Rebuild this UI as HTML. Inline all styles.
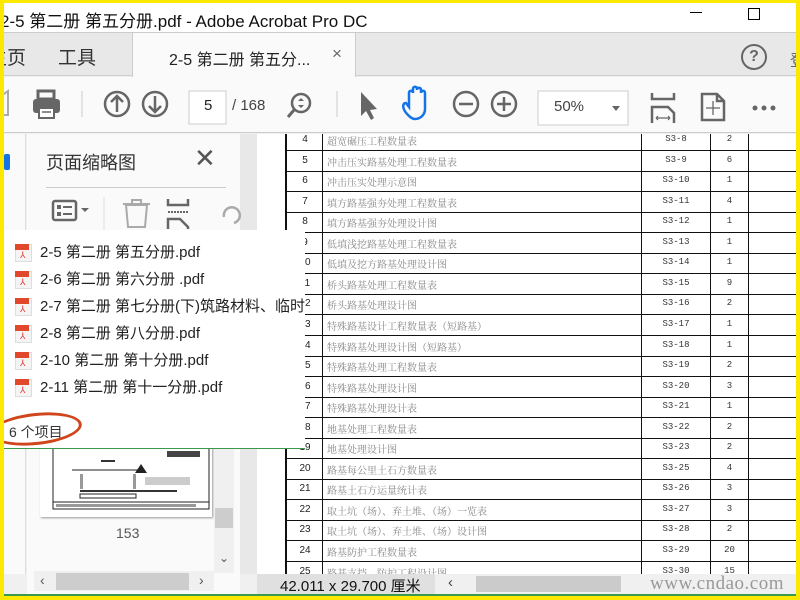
<!DOCTYPE html>
<html><head><meta charset="utf-8"><style>
*{margin:0;padding:0;box-sizing:border-box}
body{width:800px;height:600px;overflow:hidden;background:#fde800;font-family:"Liberation Sans","Noto Sans CJK SC",sans-serif;position:relative}
.a{position:absolute}
#win{position:absolute;left:4px;top:3px;width:792px;height:593px;background:#f0f0f0;overflow:hidden}
.cell{position:absolute;font-family:"Liberation Serif","Noto Serif CJK SC",serif;font-size:10px;color:#888;white-space:nowrap}
.num{font-family:"Liberation Sans",sans-serif;color:#222;font-size:10px}
.code{font-family:"Liberation Mono",monospace;color:#333;font-size:9px}
.fi{position:absolute;left:11px;width:290px;height:22px;font-size:15px;color:#222;white-space:nowrap;overflow:hidden}
.fi .ic{position:absolute;left:0;top:3px;width:17px;height:18px;background:#f4f4f4;border:1px solid #ddd}
.fi .ic:before{content:"";position:absolute;left:-1px;top:-1px;width:14px;height:6px;background:#e0472b}
.fi .ic:after{content:"⅄";position:absolute;left:4px;top:5px;font-size:9px;color:#d33}
.fi span{position:absolute;left:25px;top:0}
</style></head><body>
<div id="win">
<div class="a" style="left:0;top:0;width:792px;height:29px;background:#fff"></div>
<div class="a" style="left:-4px;top:4px;font-size:17px;color:#111;white-space:nowrap">2-5 第二册 第五分册.pdf - Adobe Acrobat Pro DC</div>
<div class="a" style="left:686px;top:9px;width:12px;height:1px;background:#000"></div>
<div class="a" style="left:744px;top:5px;width:12px;height:12px;border:1px solid #000"></div>
<div class="a" style="left:0;top:29px;width:792px;height:44px;background:#e8e8e8;border-top:1px solid #ccc;border-bottom:1px solid #ccc"></div>
<div class="a" style="left:-16px;top:40px;font-size:19px;color:#333">主页</div>
<div class="a" style="left:54px;top:40px;font-size:19px;color:#333">工具</div>
<div class="a" style="left:128px;top:29px;width:224px;height:45px;background:#fafafa;border-left:1px solid #ccc;border-right:1px solid #ccc;border-top:1px solid #ccc"></div>
<div class="a" style="left:165px;top:43px;font-size:16px;color:#222">2-5 第二册 第五分...</div>
<div class="a" style="left:328px;top:41px;font-size:17px;color:#666">×</div>
<div class="a" style="left:737px;top:41px;width:26px;height:26px;border:2.5px solid #666;border-radius:50%;text-align:center;font-size:16px;font-weight:bold;color:#666;line-height:21px">?</div>
<div class="a" style="left:786px;top:44px;font-size:16px;color:#666">登</div>
<div class="a" style="left:0;top:74px;width:792px;height:56px;background:#fafafa;border-bottom:1px solid #ccc"></div>
<svg class="a" style="left:0;top:74px" width="792" height="56">
<path d="M-4 20 L4 14 L4 38 L-4 38" fill="none" stroke="#aaa" stroke-width="2"/>
<rect x="34" y="14" width="16" height="8" fill="none" stroke="#666" stroke-width="3"/>
<rect x="29" y="22" width="27" height="14" rx="3" fill="#666"/>
<rect x="35" y="31" width="15" height="10" fill="#fff" stroke="#666" stroke-width="2"/>
<line x1="38" y1="35" x2="47" y2="35" stroke="#666" stroke-width="1.5"/>
<line x1="78" y1="14" x2="78" y2="40" stroke="#ccc"/>
<circle cx="113" cy="27" r="12" fill="none" stroke="#666" stroke-width="2.5"/>
<path d="M113 35 V19 M107 25 L113 19 L119 25" fill="none" stroke="#666" stroke-width="2.5"/>
<circle cx="151" cy="27" r="12" fill="none" stroke="#666" stroke-width="2.5"/>
<path d="M151 19 V35 M145 29 L151 35 L157 29" fill="none" stroke="#666" stroke-width="2.5"/>
<rect x="185" y="14" width="37" height="33" fill="#fff" stroke="#ccc"/>
<circle cx="297" cy="26" r="9" fill="none" stroke="#666" stroke-width="2.5"/>
<path d="M290 33 L284 40" stroke="#666" stroke-width="3"/>
<path d="M294 24 L297 21 L300 24 Z M294 28 L297 31 L300 28 Z" fill="#666"/>
<line x1="333" y1="14" x2="333" y2="40" stroke="#ccc"/>
<path d="M357 15 L357 39 L362 34 L367 43 L370 41 L366 33 L373 32 Z" fill="#666"/>
<path d="M404 38 C398 32 398 26 402 26 L405 30 L405 16 C405 13 409 13 409 16 L409 12 C409 9 413 9 413 12 L413 13 C413 10 417 10 417 13 L417 16 C417 13 421 13 421 16 L421 32 C421 38 416 42 411 42 C408 42 406 40 404 38 Z" fill="none" stroke="#1473e6" stroke-width="2.5"/>
<circle cx="462" cy="27" r="12" fill="none" stroke="#666" stroke-width="2.5"/>
<path d="M455 27 H469" stroke="#666" stroke-width="2.5"/>
<circle cx="500" cy="27" r="12" fill="none" stroke="#666" stroke-width="2.5"/>
<path d="M493 27 H507 M500 20 V34" stroke="#666" stroke-width="2.5"/>
<rect x="534" y="14" width="90" height="34" fill="#fff" stroke="#ccc"/>
<path d="M608 29 L616 29 L612 34 Z" fill="#666"/>
<path d="M648 16 V22 H670 V16 M648 46 V30 H664 L670 36 V46" fill="none" stroke="#666" stroke-width="2.5"/>
<path d="M652 41 H666 M652 41 l2 -2 M652 41 l2 2 M666 41 l-2 -2 M666 41 l-2 2" stroke="#666" stroke-width="1.2"/>
<path d="M698 17 H713 L720 24 V43 H698 Z M713 17 V24 H720" fill="none" stroke="#666" stroke-width="2.5"/>
<path d="M709 24 V38 M702 31 H716" stroke="#666" stroke-width="1.3"/>
<circle cx="751" cy="31" r="2.5" fill="#666"/><circle cx="760" cy="31" r="2.5" fill="#666"/><circle cx="769" cy="31" r="2.5" fill="#666"/>
</svg>
<div class="a" style="left:200px;top:94px;font-size:15px;color:#222">5</div>
<div class="a" style="left:228px;top:94px;font-size:15px;color:#444">/ 168</div>
<div class="a" style="left:550px;top:95px;font-size:15px;color:#444">50%</div>
<div class="a" style="left:236px;top:131px;width:556px;height:440px;background:#e8e8e8"></div>
<div class="a" style="left:253px;top:131px;width:539px;height:440px;background:#fff;overflow:hidden">
<div class="a" style="left:28px;top:0;width:2px;height:440px;background:#111"></div>
<div class="a" style="left:65px;top:0;width:1px;height:440px;background:#111"></div>
<div class="a" style="left:384px;top:0;width:1px;height:440px;background:#111"></div>
<div class="a" style="left:453px;top:0;width:1px;height:440px;background:#111"></div>
<div class="a" style="left:491px;top:0;width:1px;height:440px;background:#111"></div>
<div id="rows"></div>
</div>
<div class="a" style="left:0;top:131px;width:22px;height:440px;background:#fafafa;border-right:1px solid #ddd"></div>
<div class="a" style="left:0;top:151px;width:6px;height:16px;background:#1473e6;border-radius:2px"></div>
<div class="a" style="left:23px;top:131px;width:213px;height:465px;background:#fafafa"></div>
<div class="a" style="left:42px;top:146px;font-size:18px;color:#333">页面缩略图</div>
<div class="a" style="left:190px;top:140px;font-size:26px;color:#555;font-weight:300">✕</div>
<div class="a" style="left:42px;top:184px;width:180px;height:1px;background:#ccc"></div>
<svg class="a" style="left:40px;top:190px" width="200" height="40">
<rect x="9" y="8" width="23" height="19" rx="2" fill="none" stroke="#666" stroke-width="2.5"/>
<rect x="13" y="12" width="4" height="4" fill="#666"/><rect x="13" y="19" width="4" height="4" fill="#666"/>
<path d="M19 14 H28 M19 21 H28" stroke="#666" stroke-width="2"/>
<path d="M37 15 L45 15 L41 19 Z" fill="#666"/>
<line x1="60" y1="4" x2="60" y2="40" stroke="#ddd"/>
<path d="M82 12 L84 34 H101 L103 12 Z M79 11 H106 M88 11 V7 H97 V11" fill="none" stroke="#aaa" stroke-width="2"/>
<path d="M124 6 V12 H144 V6 M124 36 V26 H136 L144 34 V36" fill="none" stroke="#666" stroke-width="2.5"/>
<path d="M124 19 H144" stroke="#666" stroke-width="2" stroke-dasharray="2 1"/>
<path d="M180 24 A8 8 0 1 1 190 30" fill="none" stroke="#aaa" stroke-width="2.5"/>
</svg>
<div class="a" style="left:36px;top:444px;width:172px;height:70px;background:#fff;box-shadow:1px 1px 2px #999"></div>
<svg class="a" style="left:36px;top:444px" width="172" height="70">
<rect x="13" y="0" width="156" height="62" fill="none" stroke="#222"/>
<rect x="127" y="4" width="33" height="6" fill="#444"/>
<rect x="61" y="13" width="14" height="2" fill="#333"/>
<line x1="32" y1="23" x2="98" y2="23" stroke="#222"/>
<rect x="40" y="27" width="3" height="15" fill="#999"/><rect x="93" y="27" width="3" height="15" fill="#999"/>
<line x1="40" y1="44" x2="137" y2="44" stroke="#333" stroke-width="2"/>
<rect x="40" y="47" width="56" height="4" fill="none" stroke="#222"/>
<path d="M95 26 L101 17 L107 26 Z" fill="#222"/>
<rect x="105" y="30" width="45" height="8" fill="#ccc"/>
<line x1="13" y1="55" x2="169" y2="55" stroke="#222"/>
<rect x="16" y="57" width="140" height="3" fill="#999"/>
</svg>
<div class="a" style="left:112px;top:522px;font-size:14px;color:#555">153</div>
<div class="a" style="left:210px;top:444px;width:20px;height:126px;background:#f0f0f0"></div>
<div class="a" style="left:211px;top:505px;width:18px;height:20px;background:#cdcdcd"></div>
<div class="a" style="left:215px;top:548px;font-size:12px;color:#555">⌄</div>
<div class="a" style="left:30px;top:568px;width:180px;height:20px;background:#f0f0f0"></div>
<div class="a" style="left:52px;top:570px;width:133px;height:17px;background:#cdcdcd"></div>
<div class="a" style="left:36px;top:569px;font-size:14px;color:#555">‹</div>
<div class="a" style="left:195px;top:569px;font-size:14px;color:#555">›</div>
<div class="a" style="left:253px;top:571px;width:178px;height:20px;background:#e0e0e0"></div>
<div class="a" style="left:276px;top:572px;font-size:15px;color:#111">42.011 x 29.700 厘米</div>
<div class="a" style="left:431px;top:571px;width:361px;height:20px;background:#f0f0f0"></div>
<div class="a" style="left:444px;top:571px;font-size:15px;color:#444">‹</div>
<div class="a" style="left:472px;top:573px;width:145px;height:16px;background:#cbcbcb"></div>
<div class="a" style="left:646px;top:570px;font-family:'Liberation Serif',serif;font-size:19px;color:#999;letter-spacing:0.5px">www.cndao.com</div>
<div class="a" style="left:0;top:591px;width:792px;height:2px;background:#3a9a4a"></div>
<div class="a" style="left:0;top:227px;width:301px;height:219px;background:#fff;border-bottom:1.5px solid #3a9a4a"></div>
<div class="fi" style="top:238px"><div class="ic"></div><span>2-5 第二册 第五分册.pdf</span></div>
<div class="fi" style="top:265px"><div class="ic"></div><span>2-6 第二册 第六分册 .pdf</span></div>
<div class="fi" style="top:292px"><div class="ic"></div><span>2-7 第二册 第七分册(下)筑路材料、临时</span></div>
<div class="fi" style="top:319px"><div class="ic"></div><span>2-8 第二册 第八分册.pdf</span></div>
<div class="fi" style="top:346px"><div class="ic"></div><span>2-10 第二册 第十分册.pdf</span></div>
<div class="fi" style="top:373px"><div class="ic"></div><span>2-11 第二册 第十一分册.pdf</span></div>
<div class="a" style="left:5px;top:419px;font-size:14px;color:#333">6 个项目</div>
<div class="a" style="left:-14px;top:410px;width:92px;height:32px;border:3px solid #d0451b;border-radius:50%;transform:rotate(-6deg)"></div>
</div>
<script>
var d=[["4","超宽碾压工程数量表","S3-8","2"],["5","冲击压实路基处理工程数量表","S3-9","6"],["6","冲击压实处理示意图","S3-10","1"],["7","填方路基强夯处理工程数量表","S3-11","4"],["8","填方路基强夯处理设计图","S3-12","1"],["9","低填浅挖路基处理工程数量表","S3-13","1"],["10","低填及挖方路基处理设计图","S3-14","1"],["11","桥头路基处理工程数量表","S3-15","9"],["12","桥头路基处理设计图","S3-16","2"],["13","特殊路基设计工程数量表（短路基）","S3-17","1"],["14","特殊路基处理设计图（短路基）","S3-18","1"],["15","特殊路基处理工程数量表","S3-19","2"],["16","特殊路基处理设计图","S3-20","3"],["17","特殊路基处理设计表","S3-21","1"],["18","地基处理工程数量表","S3-22","2"],["19","地基处理设计图","S3-23","2"],["20","路基每公里土石方数量表","S3-25","4"],["21","路基土石方运量统计表","S3-26","3"],["22","取土坑（场）、弃土堆、（场）一览表","S3-27","3"],["23","取土坑（场）、弃土堆、（场）设计图","S3-28","2"],["24","路基防护工程数量表","S3-29","20"],["25","路基支挡、防护工程设计图","S3-30","15"]];
var h="";for(var i=0;i<d.length;i++){var t=Math.round(-4+i*20.55);
h+='<div class="a" style="left:28px;top:'+(t+20)+'px;width:520px;height:1px;background:#111"></div>';
h+='<div class="cell num" style="left:30px;width:36px;text-align:center;top:'+(t+4)+'px">'+d[i][0]+'</div>';
h+='<div class="cell" style="left:70px;top:'+(t+3)+'px">'+d[i][1]+'</div>';
h+='<div class="cell code" style="left:385px;width:68px;text-align:center;top:'+(t+4)+'px">'+d[i][2]+'</div>';
h+='<div class="cell code" style="left:454px;width:37px;text-align:center;top:'+(t+4)+'px">'+d[i][3]+'</div>';}
document.getElementById("rows").innerHTML=h;
</script>
</body></html>
